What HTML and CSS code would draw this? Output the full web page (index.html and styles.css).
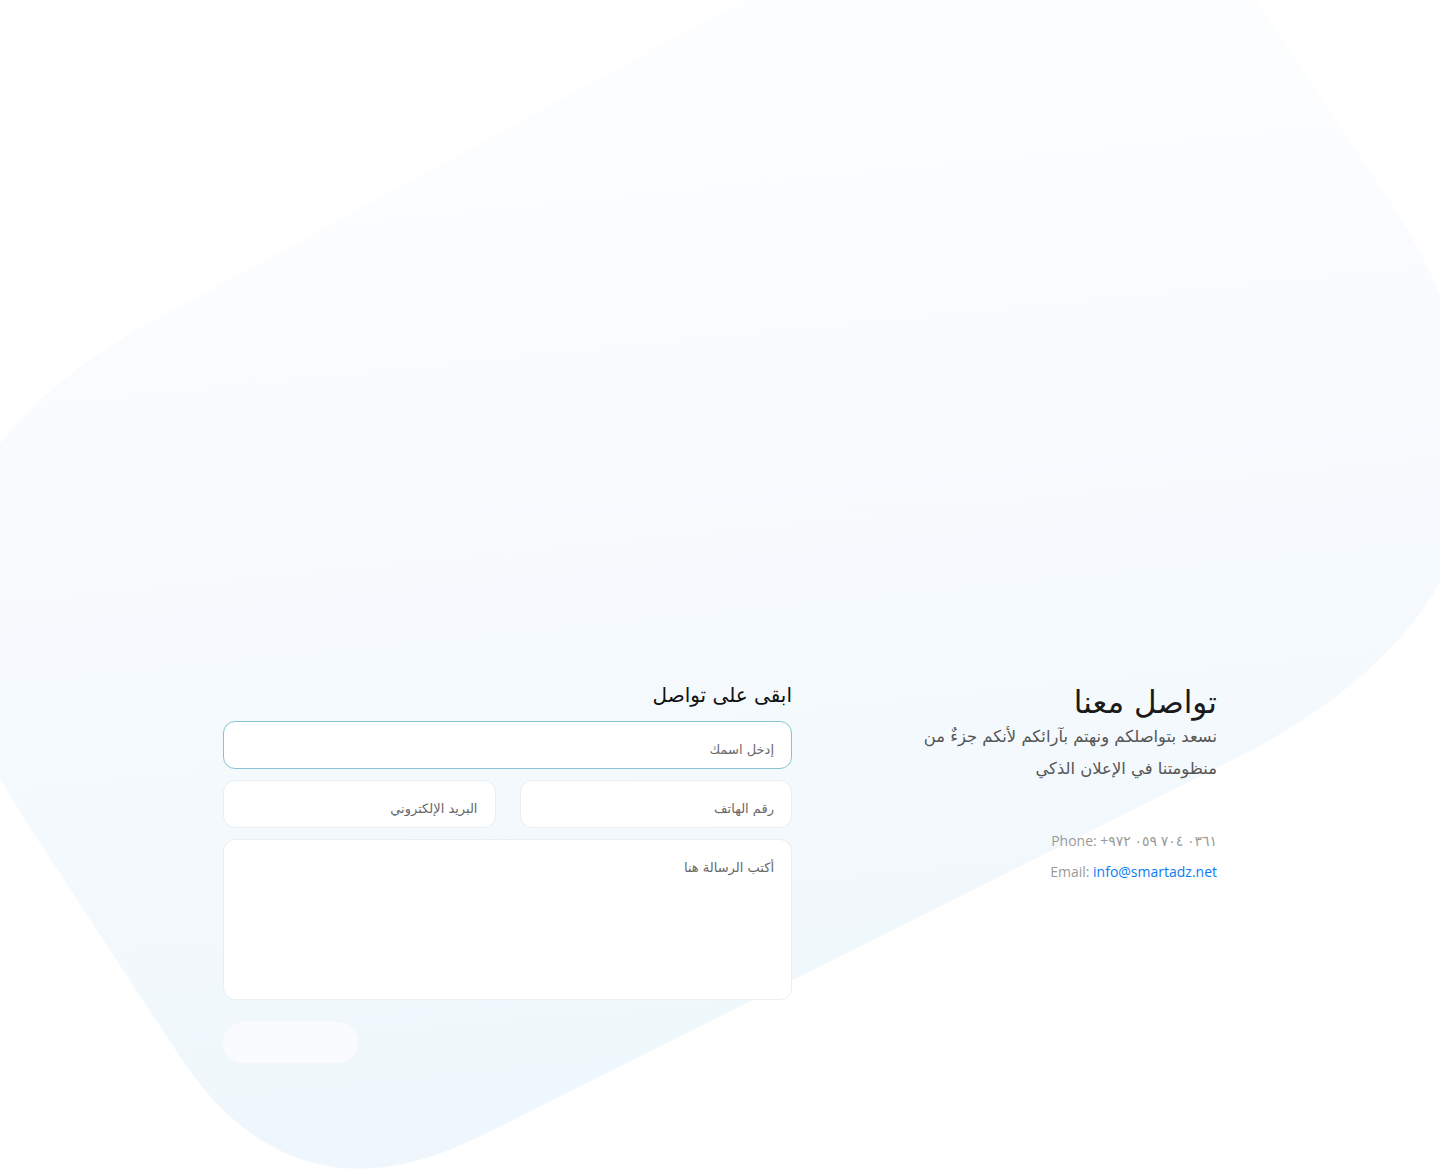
FILE: index.html
```html
<!DOCTYPE html>
<html lang="ar" dir="rtl">
<head>
<meta charset="utf-8">
<title>تواصل معنا</title>
<link rel="stylesheet" href="styles.css">
</head>
<body>
<div class="backdrop" aria-hidden="true">
  <svg width="1440" height="1169" viewBox="0 0 1440 1169" xmlns="http://www.w3.org/2000/svg">
    <defs>
      <linearGradient id="bgGrad" gradientUnits="userSpaceOnUse" x1="0" y1="0" x2="117" y2="1169">
        <stop offset="0" stop-color="#fdfeff"/>
        <stop offset="0.45" stop-color="#f8fbfe"/>
        <stop offset="1" stop-color="#eff7fc"/>
      </linearGradient>
    </defs>
    <path fill="url(#bgGrad)" d="M945.2,-109.6 Q1121,-205 1231.4,-38.2 L1380.6,186.7 Q1629,562 1226.7,763.2 L480.7,1136.1 Q293,1230 178.1,1054 L25.9,821.4 Q-182,503 152,321.7 Z"/>
  </svg>
</div>
<main class="contact">
  <div class="container">
    <section class="info">
      <h1 class="info-title">تواصل معنا</h1>
      <p class="info-lead">نسعد بتواصلكم ونهتم بآرائكم لأنكم جزءٌ من<br>منظومتنا في الإعلان الذكي</p>
      <ul class="info-details">
        <li><span class="ltr">Phone: <span class="digits">+٩٧٢ ٠٥٩ ٧٠٤ ٠٣٦١</span></span></li>
        <li><span class="ltr">Email: <a class="mail" href="#">info@smartadz.net</a></span></li>
      </ul>
    </section>
    <section class="form-col">
      <h2 class="form-title">ابقى على تواصل</h2>
      <form class="form">
        <input class="field field-focus" type="text" placeholder="إدخل اسمك">
        <div class="field-row">
          <input class="field" type="text" placeholder="رقم الهاتف">
          <input class="field" type="email" placeholder="البريد الإلكتروني">
        </div>
        <textarea class="field field-area" placeholder="أكتب الرسالة هنا"></textarea>
        <div class="actions">
          <button class="send" type="button" aria-label="إرسال"></button>
        </div>
      </form>
    </section>
  </div>
</main>
</body>
</html>
```
FILE: styles.css
```css
* { box-sizing: border-box; }
html, body {
  margin: 0;
  padding: 0;
}
body {
  width: 1440px;
  height: 1169px;
  overflow: hidden;
  position: relative;
  background: #ffffff;
  font-family: "DejaVu Sans", "Noto Sans", sans-serif;
  color: #222;
}
.backdrop {
  position: absolute;
  left: 0;
  top: 0;
  width: 1440px;
  height: 1169px;
  z-index: 0;
}
.backdrop svg { display: block; }

.contact {
  position: relative;
  z-index: 1;
  padding-top: 681px;
}
.container {
  width: 994px;
  margin: 0 auto;
  display: grid;
  grid-template-columns: 1fr 569px;
  column-gap: 40px;
  align-items: start;
}

.info { text-align: right; }
.info-title {
  margin: 0;
  padding-top: 3px;
  font-size: 31px;
  line-height: 37px;
  font-weight: 400;
  color: #1a1a1a;
}
.info-lead {
  margin: 0;
  font-size: 16.4px;
  line-height: 32px;
  color: #555;
}
.info-details {
  list-style: none;
  margin: 40px 0 0;
  padding: 0;
  font-size: 14px;
  line-height: 31px;
  color: #9a9a9a;
  font-family: "Open Sans", "DejaVu Sans", sans-serif;
}
.ltr {
  direction: ltr;
  unicode-bidi: isolate;
}
.digits {
  direction: ltr;
  unicode-bidi: bidi-override;
}
.mail {
  color: #0a7cf5;
  text-decoration: none;
}

.form-col { text-align: right; }
.form-title {
  margin: 0 0 12px;
  font-size: 20px;
  line-height: 28px;
  font-weight: 400;
  color: #111;
}
.form {
  display: flex;
  flex-direction: column;
  gap: 11px;
}
.field {
  display: block;
  width: 100%;
  height: 48px;
  padding: 8px 17px 0;
  border: 1px solid #e9eef2;
  border-radius: 12px;
  background: #ffffff;
  font-family: "DejaVu Sans", sans-serif;
  font-size: 13px;
  color: #444;
  text-align: right;
  outline: none;
}
.field::placeholder { color: #686868; opacity: 1; }
.field-focus { border-color: #86c4d3; }
.field-row {
  display: grid;
  grid-template-columns: 1fr 1fr;
  column-gap: 24px;
}
.field-area {
  height: 161px;
  padding: 18px 17px;
  line-height: 20px;
  resize: none;
}
.actions {
  display: flex;
  justify-content: flex-end;
  margin-top: 11px;
}
.send {
  width: 135px;
  height: 41px;
  border: none;
  border-radius: 21px;
  background: #f9fbfe;
  cursor: pointer;
}
```
